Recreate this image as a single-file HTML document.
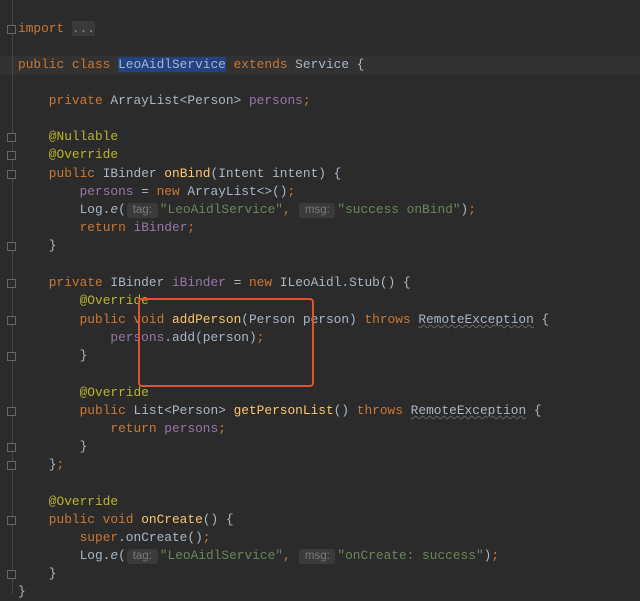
<!DOCTYPE html>
<html><head><meta charset="utf-8"><style>
body{margin:0;width:640px;height:594px;background:#2b2b2b;overflow:hidden;position:relative;font-family:"Liberation Mono",monospace;font-size:12.83px;color:#a9b7c6}
.l{position:absolute;left:18px;height:18px;line-height:18px;white-space:pre}
.k{color:#cc7832}.f{color:#9876aa}.s{color:#6a8759}.a{color:#bbb529}.m{color:#ffc66d}
.h{display:inline-block;background:#3a3a3a;color:#7a7a7a;font-family:"Liberation Sans",sans-serif;font-size:11.5px;line-height:15px;border-radius:3px;text-align:center;margin:0 2px 0 1px;vertical-align:0px}
.u{text-decoration:underline wavy #666;color:#a9b7c6;text-decoration-thickness:1px}
.g{position:absolute;left:12px;top:0;width:1px;height:594px;background:#444}
.fold{position:absolute;left:7px;width:9px;height:9px;border:1px solid #666;background:#2b2b2b;box-sizing:border-box}
.hl{position:absolute;left:0;top:56px;width:640px;height:19px;background:#323232}
.sel{background:#214283}
.box{position:absolute;left:138px;top:298px;width:176px;height:89px;border:2px solid #e2532d;border-radius:4px;box-sizing:border-box}
</style></head><body>
<div class="hl"></div>
<div class="g"></div>
<div class="fold" style="top:25px"></div>
<div class="fold" style="top:133px"></div>
<div class="fold" style="top:151px"></div>
<div class="fold" style="top:170px"></div>
<div class="fold" style="top:242px"></div>
<div class="fold" style="top:279px"></div>
<div class="fold" style="top:316px"></div>
<div class="fold" style="top:352px"></div>
<div class="fold" style="top:407px"></div>
<div class="fold" style="top:443px"></div>
<div class="fold" style="top:461px"></div>
<div class="fold" style="top:516px"></div>
<div class="fold" style="top:570px"></div>
<div class="l" style="top:20px"><span class="k">import</span> <span style="background:#3a3a3a;color:#888">...</span></div>
<div class="l" style="top:56px"><span class="k">public class</span> <span class="sel">LeoAidlService</span> <span class="k">extends</span> Service {</div>
<div class="l" style="top:92px">    <span class="k">private</span> ArrayList&lt;Person&gt; <span class="f">persons</span><span class="k">;</span></div>
<div class="l" style="top:128px">    <span class="a">@Nullable</span></div>
<div class="l" style="top:146px">    <span class="a">@Override</span></div>
<div class="l" style="top:165px">    <span class="k">public</span> IBinder <span class="m">onBind</span>(Intent intent) {</div>
<div class="l" style="top:183px">        <span class="f">persons</span> = <span class="k">new</span> ArrayList&lt;&gt;()<span class="k">;</span></div>
<div class="l" style="top:201px">        Log.<i>e</i>(<span class="h" style="width:31px">tag:</span><span class="s">"LeoAidlService"</span><span class="k">,</span> <span class="h" style="width:36px">msg:</span><span class="s">"success onBind"</span>)<span class="k">;</span></div>
<div class="l" style="top:219px">        <span class="k">return</span> <span class="f">iBinder</span><span class="k">;</span></div>
<div class="l" style="top:237px">    }</div>
<div class="l" style="top:274px">    <span class="k">private</span> IBinder <span class="f">iBinder</span> = <span class="k">new</span> ILeoAidl.Stub() {</div>
<div class="l" style="top:292px">        <span class="a">@Override</span></div>
<div class="l" style="top:311px">        <span class="k">public void</span> <span class="m">addPerson</span>(Person person) <span class="k">throws</span> <span class="u">RemoteException</span> {</div>
<div class="l" style="top:329px">            <span class="f">persons</span>.add(person)<span class="k">;</span></div>
<div class="l" style="top:347px">        }</div>
<div class="l" style="top:384px">        <span class="a">@Override</span></div>
<div class="l" style="top:402px">        <span class="k">public</span> List&lt;Person&gt; <span class="m">getPersonList</span>() <span class="k">throws</span> <span class="u">RemoteException</span> {</div>
<div class="l" style="top:420px">            <span class="k">return</span> <span class="f">persons</span><span class="k">;</span></div>
<div class="l" style="top:438px">        }</div>
<div class="l" style="top:456px">    }<span class="k">;</span></div>
<div class="l" style="top:493px">    <span class="a">@Override</span></div>
<div class="l" style="top:511px">    <span class="k">public void</span> <span class="m">onCreate</span>() {</div>
<div class="l" style="top:529px">        <span class="k">super</span>.onCreate()<span class="k">;</span></div>
<div class="l" style="top:547px">        Log.<i>e</i>(<span class="h" style="width:31px">tag:</span><span class="s">"LeoAidlService"</span><span class="k">,</span> <span class="h" style="width:36px">msg:</span><span class="s">"onCreate: success"</span>)<span class="k">;</span></div>
<div class="l" style="top:565px">    }</div>
<div class="l" style="top:583px">}</div>
<div class="box"></div>
</body></html>
